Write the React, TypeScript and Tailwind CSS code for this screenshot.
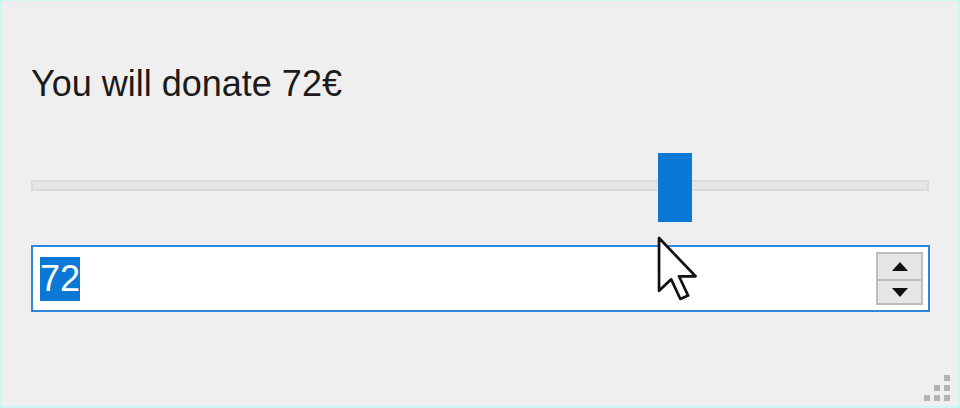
import React from "react";

const value = 72;

function Cursor() {
  // classic windows arrow, drawn ~3.4x
  return (
    <svg
      width="44"
      height="66"
      viewBox="0 0 13 19.5"
      className="pointer-events-none absolute left-[655px] top-[235px]"
    >
      <path
        d="M0.6 0.6 L0.6 16.2 L4.2 12.8 L6.9 18.6 L9.2 17.6 L6.5 11.9 L11.4 11.9 Z"
        fill="#ffffff"
        stroke="#111111"
        strokeWidth="0.8"
        strokeLinejoin="round"
      />
    </svg>
  );
}

function Spinner() {
  return (
    <div className="mr-[5px] flex h-[53px] w-[47px] flex-col border-2 border-[#bdbdbd] bg-[#e6e6e6]">
      <div className="flex h-[27px] items-center justify-center border-b-2 border-[#bdbdbd]">
        <svg width="16" height="9" viewBox="0 0 16 9">
          <path d="M8 0 L16 9 L0 9 Z" fill="#111" />
        </svg>
      </div>
      <div className="flex flex-1 items-center justify-center">
        <svg width="16" height="9" viewBox="0 0 16 9">
          <path d="M0 0 L16 0 L8 9 Z" fill="#111" />
        </svg>
      </div>
    </div>
  );
}

export default function App() {
  const pct = value / 100;

  return (
    <div
      className="relative h-[408px] w-[960px] overflow-hidden border-x-2 border-t border-b-2 border-[#c9f7f2] bg-[#f0eff0] pl-[29px] pr-[29px] pt-[62px] text-[#1b1b1b]"
      style={{ fontFamily: '"Liberation Sans", Arial, sans-serif' }}
    >
      <p className="text-[36px] leading-[41px]">You will donate {value}€</p>

      {/* slider */}
      <div className="relative mt-[49px] h-[69px] w-[898px]">
        <div className="absolute left-0 right-0 top-[27px] h-[11px] border-2 border-[#dadada] bg-[#e6e6e6]" />
        <div
          className="absolute top-0 h-[69px] w-[34px] bg-[#0a78d4]"
          style={{ left: `${Math.round(pct * 864) + 5}px` }}
        />
      </div>

      {/* number input */}
      <div className="mt-[23px] flex h-[67px] w-[899px] items-center justify-between border-2 border-[#2e87dc] bg-white pl-[7px]">
        <span className="bg-[#0a78d4] text-[36px] leading-[44px] text-white">
          {value}
        </span>
        <Spinner />
      </div>

      <Cursor />

      {/* resize grip */}
      <div className="absolute bottom-[5px] right-[8px] grid grid-cols-3 gap-[4px]">
        <span className="h-[6px] w-[6px]" />
        <span className="h-[6px] w-[6px]" />
        <span className="h-[6px] w-[6px] bg-[#b3b3b3]" />
        <span className="h-[6px] w-[6px]" />
        <span className="h-[6px] w-[6px] bg-[#b3b3b3]" />
        <span className="h-[6px] w-[6px] bg-[#b3b3b3]" />
        <span className="h-[6px] w-[6px] bg-[#b3b3b3]" />
        <span className="h-[6px] w-[6px] bg-[#b3b3b3]" />
        <span className="h-[6px] w-[6px] bg-[#b3b3b3]" />
      </div>
    </div>
  );
}
